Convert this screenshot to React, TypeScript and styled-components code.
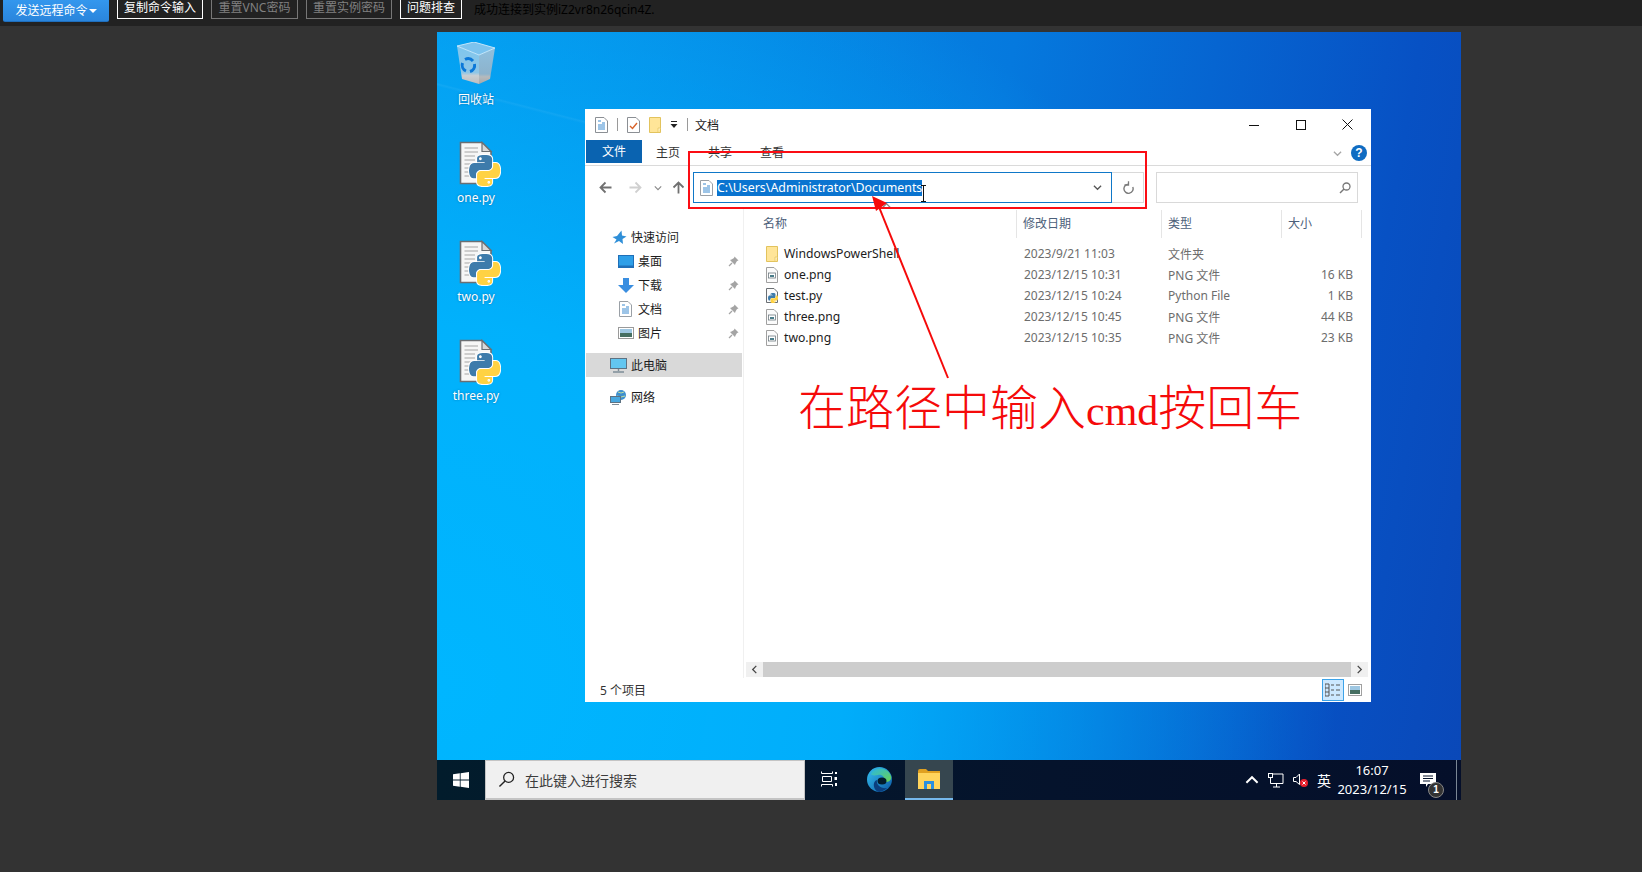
import React from 'react'
import styled, { createGlobalStyle } from 'styled-components'

const GlobalStyle = createGlobalStyle`
  html, body { margin: 0; padding: 0; background: #333333; }
  body { font-family: "Noto Sans", "Noto Sans CJK SC", sans-serif; }
`

const Page = styled.div`
  width: 1642px;
  height: 872px;
  overflow: hidden;
  background: #333333;
  display: flex;
  flex-direction: column;
`

const TopBar = styled.div`
  height: 26px;
  flex: none;
  background: #222222;
  display: flex;
  align-items: flex-start;
  padding-left: 3px;
  gap: 8px;
  font-size: 12px;
`

const SendButton = styled.div`
  width: 106px;
  height: 22px;
  background: linear-gradient(#3397ee, #2a85dc);
  border-bottom: 1px solid #1f6fbe;
  border-radius: 0 0 2px 2px;
  color: #fff;
  font-size: 12px;
  line-height: 20px;
  box-sizing: border-box;
  display: flex;
  align-items: center;
  justify-content: center;
  gap: 1px;
`

const SendCaret = styled.span`
  width: 0;
  height: 0;
  border-left: 4px solid transparent;
  border-right: 4px solid transparent;
  border-top: 4px solid #fff;
`

const OutlineButton = styled.div<{ $off?: boolean; $w: number }>`
  width: ${p => p.$w}px;
  height: 19px;
  box-sizing: border-box;
  border: 1px solid ${p => (p.$off ? '#777' : '#fff')};
  border-top: none;
  color: ${p => (p.$off ? '#808080' : '#fff')};
  line-height: 16px;
  text-align: center;
`

const Status = styled.div`
  margin-left: 4px;
  color: #000;
  line-height: 19px;
`

const Stage = styled.div`
  flex: 1;
  padding: 6px 0 0 437px;
`

const Desktop = styled.div`
  width: 1024px;
  height: 768px;
  display: flex;
  flex-direction: column;
  background:
    linear-gradient(14.4deg, transparent 33%, rgba(255,255,255,.05) 34.8%, transparent 36%) 0 0 / 148px 100px no-repeat,
    radial-gradient(ellipse 900px 800px at 0% 85%, #00b6ff 0%, rgba(0,182,255,.85) 45%, rgba(0,150,240,0) 100%),
    linear-gradient(100deg, #0698ec 0%, #0579de 50%, #0751c4 85%, #0a48b8 100%);
`

const Wallpaper = styled.div`
  flex: 1;
  position: relative;
`

const IconColumn = styled.div`
  position: absolute;
  left: 0;
  top: 10px;
  width: 78px;
  display: flex;
  flex-direction: column;
`

const DesktopIcon = styled.div<{ $bin?: boolean }>`
  height: 99px;
  display: flex;
  flex-direction: column;
  align-items: center;
  color: #fff;
  font-size: 12px;
  text-shadow: 0 0 2px rgba(0, 40, 90, .5);
  line-height: 16px;
  svg {
    display: block;
    margin: ${p => (p.$bin ? '0 0 7px 0' : '0 0 3px 5px')};
  }
`

const Explorer = styled.div`
  position: absolute;
  left: 148px;
  top: 77px;
  width: 786px;
  height: 593px;
  background: #fff;
  display: flex;
  flex-direction: column;
  font-size: 12px;
  color: #1a1a1a;
`

const TitleBar = styled.div`
  height: 31px;
  flex: none;
  display: flex;
  align-items: center;
  padding-left: 10px;
  gap: 9px;
`

const TitleRule = styled.span`
  width: 1px;
  height: 13px;
  background: #9a9a9a;
`

const TitleText = styled.span`
  margin-left: -2px;
  font-size: 12px;
  flex: 1;
`

const WindowControls = styled.div`
  display: flex;
`

const WindowControl = styled.span`
  width: 47px;
  display: flex;
  justify-content: center;
  align-items: center;
`

const TabBar = styled.div`
  height: 26px;
  flex: none;
  display: flex;
  align-items: flex-start;
  box-sizing: border-box;
  border-bottom: 1px solid #dadada;
  padding-left: 1px;
`

const FileTab = styled.div`
  width: 56px;
  height: 23px;
  background: #0a63b0;
  color: #fff;
  line-height: 23px;
  text-align: center;
`

const Tab = styled.div`
  padding: 0 14px;
  line-height: 25px;
  color: #333;
`

const RibbonEnd = styled.div`
  margin-left: auto;
  display: flex;
  align-items: center;
  gap: 9px;
  padding: 5px 4px 0 0;
`

const HelpDot = styled.span`
  width: 16px;
  height: 16px;
  border-radius: 50%;
  background: #0f6cc2;
  color: #fff;
  font: bold 12px/16px "Liberation Sans", sans-serif;
  text-align: center;
`

const AddressRow = styled.div`
  height: 43px;
  flex: none;
  display: flex;
  align-items: flex-start;
  padding: 6px 0 0 8px;
  box-sizing: border-box;
`

const NavIcon = styled.span<{ $w: number }>`
  width: ${p => p.$w}px;
  height: 31px;
  flex: none;
  display: flex;
  align-items: center;
  justify-content: center;
`

const AddressBox = styled.div`
  width: 419px;
  height: 31px;
  box-sizing: border-box;
  border: 1px solid #0f78c8;
  display: flex;
  align-items: center;
  padding: 0 9px 0 6px;
  font-size: 12.4px;
`

const SelectedPath = styled.span`
  margin-left: 4px;
  background: #0a74d0;
  color: #fff;
  line-height: 16px;
  white-space: nowrap;
  flex: none;
`

const AddressSpacer = styled.span`
  flex: 1;
`

const RefreshBox = styled.div`
  width: 32px;
  height: 31px;
  box-sizing: border-box;
  border: 1px solid #d9d9d9;
  border-left: none;
  display: flex;
  align-items: center;
  justify-content: center;
`

const SearchBox = styled.div`
  width: 202px;
  height: 31px;
  margin-left: 12px;
  box-sizing: border-box;
  border: 1px solid #d9d9d9;
  display: flex;
  align-items: center;
  justify-content: flex-end;
  padding-right: 6px;
`

const Panes = styled.div`
  flex: 1;
  display: flex;
  min-height: 0;
`

const NavPane = styled.div`
  width: 159px;
  flex: none;
  box-sizing: border-box;
  border-right: 1px solid #f0f0f0;
  padding: 16px 1px 0 1px;
`

const NavRow = styled.div<{ $indent: number; $active?: boolean; $top?: number }>`
  height: 24px;
  display: flex;
  align-items: center;
  padding-left: ${p => p.$indent}px;
  gap: 4px;
  margin-top: ${p => p.$top || 0}px;
  background: ${p => (p.$active ? '#d9d9d9' : 'transparent')};
  color: #1c1c1c;
`

const NavGlyph = styled.span`
  width: 17px;
  flex: none;
  display: flex;
  justify-content: center;
`

const PinSlot = styled.span`
  margin-left: auto;
  margin-right: 3px;
  display: flex;
`

const ListPane = styled.div`
  flex: 1;
  display: flex;
  flex-direction: column;
  min-width: 0;
`

const Columns = '273px 145px 120px 80px'

const HeaderRow = styled.div`
  display: grid;
  grid-template-columns: ${Columns};
  height: 28px;
  margin-top: 1px;
  flex: none;
  position: relative;
`

const HeaderCell = styled.div<{ $first?: boolean }>`
  padding-left: ${p => (p.$first ? 19 : 6)}px;
  border-right: 1px solid #e5e5e5;
  color: #4c607a;
  line-height: 27px;
`

const SortCaret = styled.span`
  position: absolute;
  left: 138px;
  top: -9px;
  display: flex;
`

const RowList = styled.div`
  flex: 1;
  padding-top: 5px;
`

const FileRow = styled.div`
  display: grid;
  grid-template-columns: ${Columns};
  height: 21px;
  align-items: center;
  color: #6d6d6d;
`

const NameCell = styled.div`
  padding-left: 22px;
  display: flex;
  align-items: center;
  gap: 6px;
  color: #1c1c1c;
  font-size: 12.2px;
  white-space: nowrap;
`

const TextCell = styled.div<{ $pad: number }>`
  padding-left: ${p => p.$pad}px;
`

const SizeCell = styled.div`
  text-align: right;
  padding-right: 9px;
`

const HScroll = styled.div`
  height: 15px;
  flex: none;
  margin: 0 3px 1px 2px;
  background: #f0f0f0;
  display: flex;
  align-items: center;
`

const ScrollEnd = styled.span`
  width: 17px;
  flex: none;
  display: flex;
  justify-content: center;
`

const ScrollThumb = styled.div`
  flex: 1;
  height: 100%;
  background: #cdcdcd;
`

const StatusRow = styled.div`
  height: 24px;
  flex: none;
  display: flex;
  align-items: center;
  padding: 0 5px 0 15px;
  color: #333;
`

const ViewButton = styled.span<{ $on?: boolean }>`
  width: 22px;
  height: 22px;
  box-sizing: border-box;
  display: flex;
  align-items: center;
  justify-content: center;
  background: ${p => (p.$on ? '#cce8ff' : 'transparent')};
  border: 1px solid ${p => (p.$on ? '#3da3e8' : 'transparent')};
  &:first-of-type { margin-left: auto; }
`

const RedFrame = styled.div`
  position: absolute;
  left: 103px;
  top: 42px;
  width: 459px;
  height: 58px;
  box-sizing: border-box;
  border: 2px solid #fb0d14;
  pointer-events: none;
`

const ArrowLayer = styled.svg`
  position: absolute;
  left: 0;
  top: 0;
  pointer-events: none;
`

const IBeam = styled.svg`
  position: absolute;
  left: 335px;
  top: 76px;
`

const BigNote = styled.div`
  position: absolute;
  left: 213px;
  top: 263px;
  display: flex;
  align-items: baseline;
  color: #f50a0a;
  font-family: "Noto Sans CJK SC", serif;
  font-size: 48px;
  font-weight: 300;
  line-height: 64px;
  white-space: nowrap;
`

const NoteLatin = styled.span`
  font-family: "Liberation Serif", serif;
  font-size: 42px;
  font-weight: 400;
`

const TaskBar = styled.div`
  height: 40px;
  flex: none;
  display: flex;
  align-items: stretch;
  background: linear-gradient(90deg, #021c2c, #05132c 60%, #050f2a);
  color: #fff;
`

const StartSlot = styled.div`
  width: 48px;
  display: flex;
  align-items: center;
  justify-content: center;
  flex: none;
`

const TaskSearch = styled.div`
  width: 320px;
  flex: none;
  box-sizing: border-box;
  background: #f0f0f0;
  border: 1px solid #c4c4c4;
  border-bottom-width: 2px;
  display: flex;
  align-items: center;
  gap: 10px;
  padding-left: 12px;
  color: #3c3c3c;
  font-size: 14px;
`

const TaskSlot = styled.div<{ $w: number; $active?: boolean }>`
  width: ${p => p.$w}px;
  flex: none;
  display: flex;
  align-items: center;
  justify-content: center;
  box-sizing: border-box;
  background: ${p => (p.$active ? '#36464f' : 'transparent')};
  border-bottom: 2px solid ${p => (p.$active ? '#76b9ed' : 'transparent')};
`

const Tray = styled.div`
  margin-left: auto;
  display: flex;
  align-items: center;
  font-size: 14px;
`

const TrayIcon = styled.span<{ $w: number }>`
  width: ${p => p.$w}px;
  display: flex;
  justify-content: center;
  align-items: center;
  position: relative;
`

const Clock = styled.div`
  width: 72px;
  text-align: center;
  font-size: 13px;
  line-height: 19px;
  white-space: nowrap;
`

const NoticeBadge = styled.span`
  position: absolute;
  right: 4px;
  bottom: -10px;
  width: 16px;
  height: 16px;
  box-sizing: border-box;
  border-radius: 50%;
  background: #333;
  border: 1px solid #888;
  font: bold 10px/14px "Liberation Sans", sans-serif;
  text-align: center;
`

const DesktopPeek = styled.span`
  width: 1px;
  margin: 0 4px 0 8px;
  align-self: stretch;
  background: #7a8694;
`

const PY_PATH =
  'M54.9 0C50.3 0 46 .4 42.1 1.1 30.8 3.1 28.7 7.3 28.7 15v10.3h26.8v3.4H18.6C10.8 28.7 4 33.4 1.9 42.2-.6 52.2-.7 58.5 1.9 69c1.9 7.8 6.4 13.4 14.2 13.4h9.2V70.3c0-8.9 7.6-16.6 16.7-16.6h26.8c7.4 0 13.4-6.2 13.4-13.7V15c0-7.3-6.1-12.7-13.4-13.9C64.1.3 59.5 0 54.9 0zM40.4 8.2c2.8 0 5 2.3 5 5.1s-2.2 5-5 5-5-2.2-5-5 2.2-5.1 5-5.1z'

const PythonMark = ({ x, y, size, halo }: { x: number; y: number; size: number; halo?: number }) => (
  <g transform={`translate(${x} ${y}) scale(${size / 110})`}>
    <path d={PY_PATH} fill="#3d7bab" stroke={halo ? '#fff' : 'none'} strokeWidth={halo || 0} paintOrder="stroke" />
    <path
      d={PY_PATH}
      fill="#ffd243"
      stroke={halo ? '#fff' : 'none'}
      strokeWidth={halo || 0}
      paintOrder="stroke"
      transform="rotate(180 55.4 55.2)"
    />
  </g>
)

const PyDocIcon = () => (
  <svg width="44" height="46" viewBox="0 0 44 46">
    <path d="M3.5 1.5H25L34 10.5V42.5H3.5Z" fill="#f6f6f6" stroke="#6b6f73" strokeWidth="1.6" />
    <path d="M25 1.5V10.5H34Z" fill="#d9d9d9" stroke="#6b6f73" strokeWidth="1.2" />
    {[7, 11, 15, 19, 23, 27, 31, 35].map(y => (
      <path key={y} d={`M7.5 ${y}H${y < 12 ? 21 : 18}`} stroke="#c4c4c4" strokeWidth="1.6" />
    ))}
    <PythonMark x={12} y={14} size={31} halo={7} />
  </svg>
)

const RecycleBinIcon = () => (
  <svg width="39" height="43" viewBox="0 0 39 43">
    <defs>
      <linearGradient id="binLeft" x1="0" y1="0" x2="0" y2="1">
        <stop offset="0" stopColor="#7ec6ee" />
        <stop offset=".7" stopColor="#8fc6e6" />
        <stop offset=".78" stopColor="#c9cfd3" />
        <stop offset="1" stopColor="#bdbdbd" />
      </linearGradient>
      <linearGradient id="binRight" x1="0" y1="0" x2="0" y2="1">
        <stop offset="0" stopColor="#8fc0de" />
        <stop offset=".72" stopColor="#8db3cc" />
        <stop offset=".8" stopColor="#b5babd" />
        <stop offset="1" stopColor="#a8a8a8" />
      </linearGradient>
    </defs>
    <path d="M0 4L22 13V42L5 37Z" fill="url(#binLeft)" />
    <path d="M22 13L38 6L33 37L22 42Z" fill="url(#binRight)" />
    <path d="M0 4L17 0L38 6L22 13Z" fill="#7cc3ee" stroke="#cfeafa" strokeWidth=".9" strokeLinejoin="round" />
    <g fill="none" stroke="#0b78d8" strokeWidth="3">
      <path d="M8 17.500A6.500 6.500 0 0 1 16 19" />
      <path d="M17.500 22A6.500 6.500 0 0 1 13 29.500" />
      <path d="M9 29A6.500 6.500 0 0 1 5.500 21" />
    </g>
  </svg>
)

const SmallDoc = ({ faded }: { faded?: boolean }) => (
  <svg width="13" height="16" viewBox="0 0 13 16">
    <path d="M.5.5H9L12.5 4V15.5H.5Z" fill="#fff" stroke={faded ? '#9aa0a6' : '#8b8f94'} />
    <path d="M3 4H6M7 6H10M3 8H10M3 10H10M3 12H10" stroke="#3b8ad0" strokeWidth="1" />
  </svg>
)

const CheckDoc = () => (
  <svg width="13" height="16" viewBox="0 0 13 16">
    <path d="M.5.5H9L12.5 4V15.5H.5Z" fill="#fff" stroke="#8b8f94" />
    <path d="M3 9L5.5 11.5L10 6" fill="none" stroke="#d8632a" strokeWidth="1.4" />
  </svg>
)

const TallFolder = () => (
  <svg width="12" height="16" viewBox="0 0 12 16">
    <path d="M.5.5H11.5V15.5H.5Z" fill="#ffe598" stroke="#e2c35d" />
    <path d="M9 15.5V11H11.5" fill="#fff2c4" stroke="#e2c35d" strokeWidth=".7" />
  </svg>
)

const QuickDrop = () => (
  <svg width="8" height="8" viewBox="0 0 8 8">
    <path d="M1 .5H7" stroke="#222" />
    <path d="M.5 3H7.500L4 7Z" fill="#222" />
  </svg>
)

const ImageFile = () => (
  <svg width="12" height="16" viewBox="0 0 12 16">
    <path d="M.5.5H8L11.5 4V15.5H.5Z" fill="#fbfbfb" stroke="#a0a0a0" />
    <rect x="2.5" y="6" width="7" height="5" fill="#fff" stroke="#6f7a80" strokeWidth=".8" />
    <rect x="4" y="8" width="4" height="2" fill="#4b7d8a" />
  </svg>
)

const PyFile = () => (
  <svg width="12" height="16" viewBox="0 0 12 16">
    <path d="M.5.5H8L11.5 4V14.5H.5Z" fill="#fbfbfb" stroke="#6b6f73" />
    <PythonMark x={2} y={5} size={10} />
  </svg>
)

const Pin = () => (
  <svg width="11" height="11" viewBox="0 0 11 11">
    <path d="M6.5 .5L10.5 4.5L9 5L7.5 7.5L7 9L2 4L3.5 3.5L6 2Z" fill="#a4a4a4" />
    <path d="M4 7L1 10" stroke="#a4a4a4" strokeWidth="1.2" />
  </svg>
)

const StarIcon = () => (
  <svg width="15" height="15" viewBox="0 0 15 15">
    <path d="M9.5 .5L10 5.5L14.5 6.5L10.5 9L11 14L7 11L2 13.5L4.5 9.5L.5 7L5 6Z" fill="#2f8fd8" />
  </svg>
)

const DesktopGlyph = () => (
  <svg width="16" height="13" viewBox="0 0 16 13">
    <rect width="16" height="13" fill="#1f6fb8" />
    <rect x="1" y="1" width="14" height="9.5" fill="#2e9fe8" />
  </svg>
)

const DownGlyph = () => (
  <svg width="16" height="15" viewBox="0 0 16 15">
    <path d="M5 0H11V7H16L8 15L0 7H5Z" fill="#3a8ee0" />
  </svg>
)

const PictureGlyph = () => (
  <svg width="16" height="12" viewBox="0 0 16 12">
    <rect x=".5" y=".5" width="15" height="11" fill="#fff" stroke="#9a9a9a" />
    <rect x="2" y="2" width="12" height="4" fill="#9ec7e2" />
    <rect x="2" y="6" width="12" height="4" fill="#466f62" />
  </svg>
)

const ThumbGlyph = () => (
  <svg width="14" height="12" viewBox="0 0 14 12">
    <rect x=".5" y=".5" width="13" height="11" fill="#fff" stroke="#a0a0a0" />
    <rect x="2" y="2" width="10" height="4" fill="#9ec7e2" />
    <rect x="2" y="6" width="10" height="4" fill="#466f62" />
  </svg>
)

const PcGlyph = () => (
  <svg width="17" height="15" viewBox="0 0 17 15">
    <rect x=".5" y=".5" width="16" height="10" fill="#63c6f0" stroke="#5d7283" />
    <path d="M8.5 11V13M3 14H14" stroke="#7d8d98" strokeWidth="1.4" />
  </svg>
)

const NetworkGlyph = () => (
  <svg width="17" height="15" viewBox="0 0 17 15">
    <circle cx="11" cy="5" r="5" fill="#3f8fcf" />
    <path d="M8 2Q11 4 14 2M7 6Q11 8 15 6" stroke="#bfe0a0" fill="none" />
    <rect x=".5" y="6.5" width="10" height="6" fill="#48a8e0" stroke="#5d7283" />
    <path d="M2 14.5H9" stroke="#7d8d98" />
  </svg>
)

const Chevron = ({ dir = 'down', color = '#666', size = 9 }: { dir?: string; color?: string; size?: number }) => {
  const d: Record<string, string> = { down: 'M1 3L5 7L9 3', up: 'M1 7L5 3L9 7', left: 'M7 1L3 5L7 9', right: 'M3 1L7 5L3 9' }
  return (
    <svg width={size} height={size} viewBox="0 0 10 10">
      <path d={d[dir]} fill="none" stroke={color} strokeWidth="1.4" />
    </svg>
  )
}

const ArrowGlyph = ({ rot, color }: { rot: number; color: string }) => (
  <svg width="13" height="13" viewBox="0 0 13 13" style={{ transform: `rotate(${rot}deg)` }}>
    <path d="M12.5 6.5H2M6.5 1.5L1.5 6.5L6.5 11.5" fill="none" stroke={color} strokeWidth="1.8" />
  </svg>
)

const RefreshGlyph = () => (
  <svg width="12" height="13" viewBox="0 0 12 13">
    <path d="M7 2.6A4.600 4.600 0 1 1 2.700 4.500" fill="none" stroke="#7b7b7b" strokeWidth="1.4" transform="rotate(60 6 7.500)" />
    <path d="M6.500 .2V4H2.500" fill="none" stroke="#7b7b7b" strokeWidth="1.3" />
  </svg>
)

const LensGlyph = ({ color, size }: { color: string; size: number }) => (
  <svg width={size} height={size} viewBox="0 0 12 12">
    <circle cx="7.5" cy="4.5" r="3.5" fill="none" stroke={color} strokeWidth={size > 12 ? 0.9 : 1.3} />
    <path d="M5 7L1 11" stroke={color} strokeWidth={size > 12 ? 1 : 1.5} />
  </svg>
)

const WindowsLogo = () => (
  <svg width="16" height="16" viewBox="0 0 16 16">
    <path d="M0 2.3L6.8 1.3V7.6H0ZM7.6 1.2L16 0V7.6H7.6ZM0 8.4H6.8V14.7L0 13.7ZM7.6 8.4H16V16L7.6 14.8Z" fill="#fff" />
  </svg>
)

const TaskViewGlyph = () => (
  <svg width="16" height="16" viewBox="0 0 16 16">
    <path d="M.5 .5V2.5H11.5V.5M.5 15.5V13.5H11.5V15.5M1.5 5.5H10.5V10.5H1.5Z" fill="none" stroke="#fff" />
    <rect x="14" y="1" width="2" height="2" fill="#fff" />
    <rect x="13.5" y="6" width="2.5" height="3" fill="#fff" />
    <rect x="14" y="12" width="2" height="3" fill="#fff" />
  </svg>
)

const EdgeGlyph = () => (
  <svg width="25" height="25" viewBox="0 0 25 25">
    <defs>
      <linearGradient id="edgeA" x1="0" y1="0" x2="1" y2="1">
        <stop offset="0" stopColor="#35c1f1" />
        <stop offset="1" stopColor="#0c59a4" />
      </linearGradient>
      <linearGradient id="edgeB" x1="0" y1="0" x2="1" y2="1">
        <stop offset="0" stopColor="#2bb7e0" />
        <stop offset="1" stopColor="#6bd24f" />
      </linearGradient>
    </defs>
    <circle cx="12.5" cy="12.5" r="12.5" fill="url(#edgeA)" />
    <path d="M4 7C7 0 20-1 24 9C25.5 14 20 16 16.5 15C19 11 15 7 11 8C8 8.500 5 9 4 7Z" fill="url(#edgeB)" />
    <path d="M10 13C9 18 14 22 20 21C17 24 13 25 12 25C6 24 5 14 10 13Z" fill="#0b3f7e" />
    <ellipse cx="15" cy="14" rx="4.500" ry="3.500" fill="#021c2c" />
  </svg>
)

const FolderTaskGlyph = () => (
  <svg width="22" height="20" viewBox="0 0 22 20">
    <path d="M0 2Q0 0 2 0H8L10 2H22V20H0Z" fill="#e0a020" />
    <rect y="4" width="22" height="16" fill="#ffd45c" />
    <path d="M6 12H16V20H13V15H9V20H6Z" fill="#2a8fe0" />
  </svg>
)

const NetTray = () => (
  <svg width="16" height="15" viewBox="0 0 16 15">
    <path d="M3.500 1H15V10.500H2.500V5M8.500 10.500V14M5 14H12" fill="none" stroke="#fff" />
    <rect x=".5" y=".5" width="4" height="4" fill="#05132c" stroke="#fff" />
  </svg>
)

const SpeakerTray = () => (
  <svg width="15" height="14" viewBox="0 0 15 14">
    <path d="M.5 4.500H3L6.500 1V11.500L3 8.500H.5Z" fill="none" stroke="#fff" />
    <circle cx="11" cy="10" r="4" fill="#e81f2c" />
    <path d="M9.500 8.500L12.500 11.500M12.500 8.500L9.500 11.500" stroke="#fff" />
  </svg>
)

const NoticeGlyph = () => (
  <svg width="16" height="15" viewBox="0 0 16 15">
    <path d="M0 0H16V11H8L6 14V11H0Z" fill="#fff" />
    <path d="M3 3H13M3 5.500H13M3 8H10" stroke="#05132c" />
  </svg>
)

const navItems = [
  { label: '桌面', icon: <DesktopGlyph /> },
  { label: '下载', icon: <DownGlyph /> },
  { label: '文档', icon: <SmallDoc faded /> },
  { label: '图片', icon: <PictureGlyph /> },
]

const files = [
  { name: 'WindowsPowerShell', date: '2023/9/21 11:03', type: '文件夹', size: '', icon: <TallFolder /> },
  { name: 'one.png', date: '2023/12/15 10:31', type: 'PNG 文件', size: '16 KB', icon: <ImageFile /> },
  { name: 'test.py', date: '2023/12/15 10:24', type: 'Python File', size: '1 KB', icon: <PyFile /> },
  { name: 'three.png', date: '2023/12/15 10:45', type: 'PNG 文件', size: '44 KB', icon: <ImageFile /> },
  { name: 'two.png', date: '2023/12/15 10:35', type: 'PNG 文件', size: '23 KB', icon: <ImageFile /> },
]

export default function App() {
  return (
    <Page>
      <GlobalStyle />
      <TopBar>
        <SendButton>发送远程命令<SendCaret /></SendButton>
        <OutlineButton $w={86}>复制命令输入</OutlineButton>
        <OutlineButton $w={87} $off>重置VNC密码</OutlineButton>
        <OutlineButton $w={86} $off>重置实例密码</OutlineButton>
        <OutlineButton $w={62}>问题排查</OutlineButton>
        <Status>成功连接到实例iZ2vr8n26qcin4Z.</Status>
      </TopBar>
      <Stage>
        <Desktop>
          <Wallpaper>
            <IconColumn>
              <DesktopIcon $bin><RecycleBinIcon />回收站</DesktopIcon>
              <DesktopIcon><PyDocIcon />one.py</DesktopIcon>
              <DesktopIcon><PyDocIcon />two.py</DesktopIcon>
              <DesktopIcon><PyDocIcon />three.py</DesktopIcon>
            </IconColumn>
            <Explorer>
              <TitleBar>
                <SmallDoc />
                <TitleRule />
                <CheckDoc />
                <TallFolder />
                <QuickDrop />
                <TitleRule />
                <TitleText>文档</TitleText>
                <WindowControls>
                  <WindowControl>
                    <svg width="10" height="10" viewBox="0 0 10 10"><path d="M0 5.500H10" stroke="#111" /></svg>
                  </WindowControl>
                  <WindowControl>
                    <svg width="10" height="10" viewBox="0 0 10 10"><rect x=".5" y=".5" width="9" height="9" fill="none" stroke="#111" /></svg>
                  </WindowControl>
                  <WindowControl>
                    <svg width="11" height="11" viewBox="0 0 11 11"><path d="M.5 .5L10.500 10.500M10.500 .5L.5 10.500" stroke="#111" /></svg>
                  </WindowControl>
                </WindowControls>
              </TitleBar>
              <TabBar>
                <FileTab>文件</FileTab>
                <Tab>主页</Tab>
                <Tab>共享</Tab>
                <Tab>查看</Tab>
                <RibbonEnd>
                  <Chevron color="#a6a6a6" />
                  <HelpDot>?</HelpDot>
                </RibbonEnd>
              </TabBar>
              <AddressRow>
                <NavIcon $w={24}><ArrowGlyph rot={0} color="#707070" /></NavIcon>
                <NavIcon $w={36}><ArrowGlyph rot={180} color="#d0d0d0" /></NavIcon>
                <NavIcon $w={10}><Chevron color="#888" size={8} /></NavIcon>
                <NavIcon $w={30}><ArrowGlyph rot={90} color="#707070" /></NavIcon>
                <AddressBox>
                  <SmallDoc faded />
                  <SelectedPath>C:\Users\Administrator\Documents</SelectedPath>
                  <AddressSpacer />
                  <Chevron color="#555" />
                </AddressBox>
                <RefreshBox><RefreshGlyph /></RefreshBox>
                <SearchBox><LensGlyph color="#777" size={12} /></SearchBox>
              </AddressRow>
              <Panes>
                <NavPane>
                  <NavRow $indent={26}><StarIcon />快速访问</NavRow>
                  {navItems.map(n => (
                    <NavRow key={n.label} $indent={31}>
                      <NavGlyph>{n.icon}</NavGlyph>
                      {n.label}
                      <PinSlot><Pin /></PinSlot>
                    </NavRow>
                  ))}
                  <NavRow $indent={24} $active $top={8}><PcGlyph />此电脑</NavRow>
                  <NavRow $indent={24} $top={8}><NetworkGlyph />网络</NavRow>
                </NavPane>
                <ListPane>
                  <HeaderRow>
                    <HeaderCell $first>名称</HeaderCell>
                    <HeaderCell>修改日期</HeaderCell>
                    <HeaderCell>类型</HeaderCell>
                    <HeaderCell>大小</HeaderCell>
                    <SortCaret><Chevron dir="up" color="#888" /></SortCaret>
                  </HeaderRow>
                  <RowList>
                    {files.map(f => (
                      <FileRow key={f.name}>
                        <NameCell>{f.icon}{f.name}</NameCell>
                        <TextCell $pad={7}>{f.date}</TextCell>
                        <TextCell $pad={6}>{f.type}</TextCell>
                        <SizeCell>{f.size}</SizeCell>
                      </FileRow>
                    ))}
                  </RowList>
                  <HScroll>
                    <ScrollEnd><Chevron dir="left" color="#444" /></ScrollEnd>
                    <ScrollThumb />
                    <ScrollEnd><Chevron dir="right" color="#444" /></ScrollEnd>
                  </HScroll>
                </ListPane>
              </Panes>
              <StatusRow>
                5 个项目
                <ViewButton $on>
                  <svg width="16" height="14" viewBox="0 0 16 14">
                    <path d="M4 1H0V13H4ZM6 2H9M11 2H15M6 7H9M11 7H15M6 12H9M11 12H15M0 5H4M0 9H4" fill="none" stroke="#555" />
                  </svg>
                </ViewButton>
                <ViewButton><ThumbGlyph /></ViewButton>
              </StatusRow>
              <RedFrame />
              <ArrowLayer width="786" height="593" viewBox="0 0 786 593">
                <path d="M363 269L292 93" stroke="#f50a0a" strokeWidth="2" />
                <path d="M287 87L302 94L291 102Z" fill="#f50a0a" />
              </ArrowLayer>
              <IBeam width="7" height="17" viewBox="0 0 7 17">
                <path d="M1 .5H6M3.500 .5V16.500M1 16.500H6" stroke="#111" />
              </IBeam>
              <BigNote>在路径中输入<NoteLatin>cmd</NoteLatin>按回车</BigNote>
            </Explorer>
          </Wallpaper>
          <TaskBar>
            <StartSlot><WindowsLogo /></StartSlot>
            <TaskSearch><LensGlyph color="#222" size={17} />在此键入进行搜索</TaskSearch>
            <TaskSlot $w={48}><TaskViewGlyph /></TaskSlot>
            <TaskSlot $w={52}><EdgeGlyph /></TaskSlot>
            <TaskSlot $w={48} $active><FolderTaskGlyph /></TaskSlot>
            <Tray>
              <TrayIcon $w={24}><Chevron dir="up" color="#fff" size={14} /></TrayIcon>
              <TrayIcon $w={24}><NetTray /></TrayIcon>
              <TrayIcon $w={24}><SpeakerTray /></TrayIcon>
              <TrayIcon $w={24}>英</TrayIcon>
              <Clock>16:07<br />2023/12/15</Clock>
              <TrayIcon $w={40}><NoticeGlyph /><NoticeBadge>1</NoticeBadge></TrayIcon>
              <DesktopPeek />
            </Tray>
          </TaskBar>
        </Desktop>
      </Stage>
    </Page>
  )
}
